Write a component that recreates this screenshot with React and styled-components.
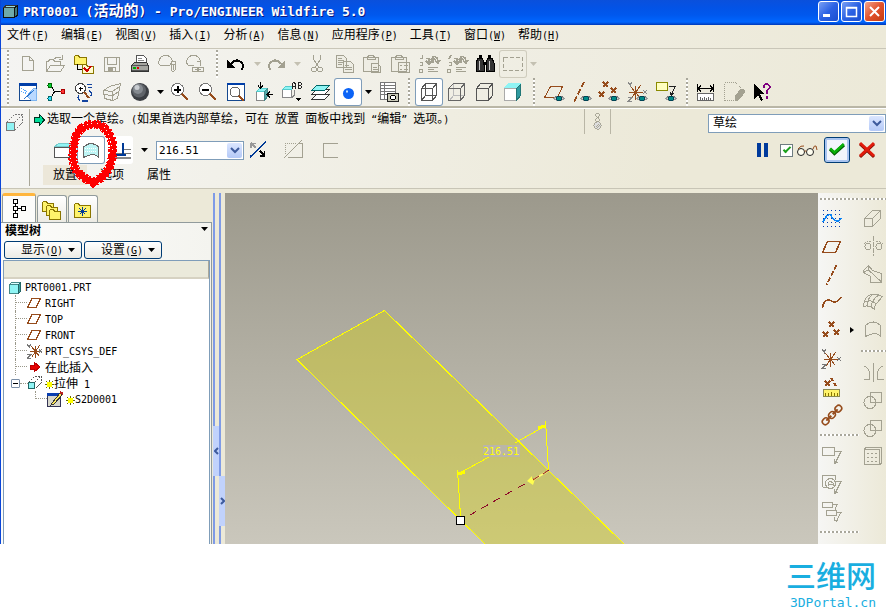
import React from "react";
import styled, { createGlobalStyle, css } from "styled-components";

const GREY = "#a3a191";
const BROWN = "#964c1c";
const CYAN = "#8ff4f4";

const GlobalStyle = createGlobalStyle`
  *, *::before, *::after { box-sizing: border-box; }
  body { margin: 0; background: #fff; color: #000; font: 12px/16px "Liberation Sans", "Noto Sans CJK SC", sans-serif; }
  button, select, input { font: inherit; color: inherit; margin: 0; padding: 0; }
  button { border: 0; background: none; }
  svg { display: block; flex: none; }
  ul { list-style: none; margin: 0; padding: 0; }
`;

/* ---------- text ---------- */

const Latin = styled.span`
  font-family: "DejaVu Sans Mono", monospace;
  font-size: ${(p) => p.$size || 10}px;
  white-space: pre;
`;

const Mixed = ({ text, size }) =>
  text.split(/([\x20-\x7e“”]+)/).map((part, i) =>
    i % 2 ? (
      <Latin key={i} $size={size}>{part}</Latin>
    ) : (
      part
    )
  );

/* ---------- icons ---------- */

const Glyph = styled.svg.attrs({ fill: "none", strokeWidth: 1, shapeRendering: "crispEdges", "aria-hidden": true })`
  stroke: currentColor;
`;

const Eye = ({ x, y }) => (
  <g transform={`translate(${x} ${y})`}>
    <path d="M0 3.500C2 .5 8 .5 10 3.500 8 6.500 2 6.500 0 3.500z" fill="#d8d8d0" stroke="#999" />
    <path d="M1 1.500h8" stroke="#777" />
    <circle cx="5" cy="3.500" r="2.500" fill="#008a86" stroke="#045" />
  </g>
);
const Cross = ({ x, y, s = 2 }) => (
  <path
    d={`M${x - s} ${y - s}L${x + s + 1} ${y + s + 1}M${x + s + 1} ${y - s}L${x - s} ${y + s + 1}`}
    stroke={BROWN}
    strokeWidth="1.500"
  />
);
const Star = ({ x, y, s = 6 }) => (
  <path
    d={`M${x - s} ${y}h${2 * s}M${x} ${y - s}v${2 * s}M${x - s + 2} ${y - s + 1}L${x + s - 2} ${y + s - 1}M${x + s - 2} ${y - s}L${x - s + 2} ${y + s}`}
    stroke={BROWN}
  />
);
const Folder = ({ x, y, w = 11, h = 9, fill = "#fff36b" }) => (
  <path d={`M${x} ${y + h}v${-h}l1-1h3l1 2h${w - 5}v${h - 1}z`} fill={fill} stroke="#8a7500" />
);

const icons = {
  fresh: <path d="M8.5 6.500h7l4 4v10h-11zM15.500 6.500v4h4" />,
  open: <path d="M4.500 21V11.500h2l1-2h4l1 2h6v3M4.500 21.500l4-6h14l-4 6zM11.500 9.500q4-4 8-1M20.500 5v4h-4" />,
  workdir: (
    <>
      <Folder x={4.5} y={6.5} w={12} h={8} />
      <path d="M7.500 14v5.500h4" stroke="#000" />
      <Folder x={12.5} y={15.5} w={11} h={8} fill="#fffbd0" />
      <path d="M14 18l3 3 4-5" stroke="#c00" strokeWidth="2" />
    </>
  ),
  save: (
    <>
      <path d="M6.500 7.500h15v14h-15zM9.500 7.500v7h9v-7M10.500 21v-4h7v4" />
      <path d="M11 18h3v3h-3z" fill={GREY} />
    </>
  ),
  print: (
    <>
      <path d="M10.500 14V5.500h7l3 3V14" fill="#fff" stroke="#555" />
      <path d="M12 8.500h4M12 10.500h6M12 12.500h6" stroke="#888" />
      <path d="M5.500 15.500l3-3h12l2 3v6h-17z" fill="#a5a5a0" stroke="#333" />
      <path d="M6 15.500h16M6 20.500h16" stroke="#555" />
      <path d="M7 18h3" stroke="#0a0" strokeWidth="2" />
      <path d="M11 18h2" stroke="#d00" strokeWidth="2" />
    </>
  ),
  find: <path d="M5.500 15.500h10l3-4q-1-6-7-6t-7 7l1 3M17.500 11.500h3.500v3h-3.500zM17 14v6q2 3 4 0V14M19 14v6" />,
  link: <path d="M5.500 15.500h6M5.500 15.500l-1-4q1-6 7-6t7 6v4M15 11.500h3v3M10.500 17.500h5v4h-5zM16.500 17.500h5v4h-5zM13 19.500h6" />,
  undo: (
    <>
      <path d="M8 14q5-6 10-2 4 4 0 8" stroke="#000" strokeWidth="2" />
      <path d="M4 10v8h8z" fill="#000" stroke="none" />
    </>
  ),
  redo: (
    <>
      <path d="M18 14q-5-6-10-2-4 4 0 8" strokeWidth="2" />
      <path d="M22 10v8h-8z" fill={GREY} stroke="none" />
    </>
  ),
  cut: (
    <>
      <path d="M10.500 5v4l5 8M17.500 5v4l-5 8" />
      <circle cx="11" cy="19.500" r="2.500" />
      <circle cx="17" cy="19.500" r="2.500" />
    </>
  ),
  copy: <path d="M5.500 5.500h7l3 3v9h-10zM7 8.500h4M7 10.500h6M7 12.500h6M7 14.500h4M12.500 11.500h7l3 3v8h-10zM14 15.500h4M14 17.500h7M14 19.500h7" fill="#eeede4" />,
  paste: <path d="M4.500 7.500h15v14h-15zM8 7.500l2-2h4l2 2v2H8zM12.500 13.500h6l3 3v6h-9zM14 17.500h4M14 19.500h6" fill="#eeede4" />,
  pasteSpecial: <path d="M4.500 7.500h15v14h-15zM8 7.500l2-2h4l2 2v2H8zM11.500 12.500h11v10h-11zM13 15.500h2M13 19.500h2M17 15.500h4M17 19.500h4" fill="#eeede4" />,
  regen: <path d="M7.500 5v3.500h-3M4.500 12.500h3v3h-3M4.500 19.500h3v3h-3zM11 8.500h3v5M11 11l3 3 3-3M18 12.500V8M15.500 10l2.500-3 2.500 3M19 6.500q4 0 4 6M20 11l3 2 2-3M13 17.500h10M13 19.500h6M13 21.500h10" strokeWidth="1.500" />,
  regenMgr: <path d="M8.500 5l-3 4M5.500 12.500h3v3h-3M4.500 19.500h3v3h-3zM11 8.500h3v5M11 11l3 3 3-3M18 12.500V8M15.500 10l2.500-3 2.500 3M19 6.500q4 0 4 6M20 11l3 2 2-3M13 17.500h10M13 19.500h6M13 21.500h10" strokeWidth="1.500" />,
  binoculars: (
    <>
      <path d="M7 8h4l2 4v9H5v-8zM17 8h4l2 5v8h-8v-9z" fill="#333" stroke="#000" />
      <path d="M8 6h3M17 6h3M12 13h4" stroke="#000" strokeWidth="3" />
      <path d="M8.500 11v9M18.500 11v9" stroke="#ccc" />
    </>
  ),
  marquee: <path d="M4.500 7.500h19v13h-19z" strokeDasharray="4 2" />,

  repaint: (
    <>
      <path d="M5.500 5.500h17v17h-17z" fill="#fff" stroke="#16498f" />
      <path d="M5 6.500h18" stroke="#003ea8" strokeWidth="3" />
      <path d="M7 10.500l6 3M7 13.500l6 2" stroke="#55a8ff" strokeDasharray="1 1" />
      <path d="M13 18l7-8 2 1v11h-5z" fill="#b9d9ff" stroke="#7db5f0" />
      <path d="M10 21l10-9" stroke="#2c77cf" />
    </>
  ),
  spin: (
    <>
      <path d="M9 8l3.500 5.500L9 20M13 13.500h7" stroke="#000" />
      <circle cx="8" cy="7.500" r="2" fill="#0c3" stroke="#060" />
      <circle cx="8" cy="20.500" r="2" fill="#3df" stroke="#066" />
      <circle cx="21" cy="13.500" r="2" fill="#f33" stroke="#a00" />
    </>
  ),
  orient: (
    <>
      <circle cx="10.500" cy="10.500" r="5" fill="#fff" stroke="#444" />
      <path d="M10.500 8.500v4M8.500 10.500h4" stroke="#000" />
      <path d="M14 14l5 6" stroke={BROWN} strokeWidth="2" />
      <path d="M17 6.500h5M18 9.500h4M9 17.500q-2 3 1 5M19 13q4 1 2 5M12 23h6" stroke="#13449f" strokeWidth="1.500" />
    </>
  ),
  sketchView: <path d="M11.500 8.500l11-3-3 15-5 2-8-2-1-8 6-4M6 12.500l8 1 8-5M14.500 13v9M6 16l8 2 6-4" />,
  shade: (
    <g shapeRendering="auto" stroke="none">
      <circle cx="14" cy="14" r="9" fill="#3b3e43" />
      <circle cx="13" cy="12.500" r="7" fill="#5f6369" />
      <circle cx="12" cy="11" r="5" fill="#858a90" />
      <circle cx="11" cy="9.500" r="2.500" fill="#c9cdd2" />
    </g>
  ),
  zoomIn: (
    <>
      <circle cx="11.500" cy="11.500" r="6" fill="#fff" stroke="#777" />
      <path d="M11.500 8v7M8 11.500h7" stroke="#000" strokeWidth="2" />
      <path d="M16 16l6 6" stroke={BROWN} strokeWidth="2" />
    </>
  ),
  zoomOut: (
    <>
      <circle cx="11.500" cy="11.500" r="6" fill="#fff" stroke="#777" />
      <path d="M8 11.500h7" stroke="#000" strokeWidth="2" />
      <path d="M16 16l6 6" stroke={BROWN} strokeWidth="2" />
    </>
  ),
  refit: (
    <>
      <path d="M5.500 5.500h17v17h-17z" fill="#fff" stroke="#16498f" />
      <path d="M5 6h18" stroke="#003ea8" strokeWidth="2" />
      <circle cx="13" cy="14" r="5" fill="#fff" stroke="#666" />
      <path d="M17 18l5 5" stroke={BROWN} strokeWidth="2" />
    </>
  ),
  reorient: (
    <>
      <path d="M6.500 13.500h8v9h-8z" fill="#fff" stroke="#888" />
      <path d="M6.500 13.500l3-3h8l-3 3z" fill={CYAN} stroke="#5cc" />
      <path d="M14.500 13.500l3-3v8l-3 4z" fill="#5aa" stroke="#488" />
      <path d="M10.500 4v6M8 7.500l2.500 3 2.500-3M23 16.500h-6M20 13.500l-3 3 3 3" stroke="#000" />
    </>
  ),
  savedViews: (
    <>
      <path d="M4.500 11.500h9v8h-9z" fill="#fff" stroke="#888" />
      <path d="M4.500 11.500l3-3h8l-2 3z" fill={CYAN} stroke="#5cc" />
      <path d="M13.500 20l3-3v-5" stroke="#888" />
      <path d="M14.500 11V6l1.500-2 1.500 2v5M14.500 8.500h3M20.500 11V4.500h2l1 1v1l-1 1h-2M22.500 7.500l1 1v1l-1 1h-2" stroke="#222" />
      <path d="M17 20h6l-3 3z" fill="#000" stroke="none" />
    </>
  ),
  layers: (
    <>
      <path d="M5.500 21.500l5-5h13l-5 5z" fill="#fff" stroke="#333" />
      <path d="M5.500 16.500l5-5h13l-5 5z" fill="#fff" stroke="#333" />
      <path d="M5.500 12.500l5-5h13l-5 5z" fill={CYAN} stroke="#066" />
    </>
  ),
  blueDot: (
    <g shapeRendering="auto">
      <circle cx="14.500" cy="15.500" r="5.500" fill="#0b63f6" stroke="none" />
      <path d="M12 13.500h2" stroke="#bfe0ff" strokeWidth="2" />
    </g>
  ),
  viewMgr: (
    <>
      <path d="M6.500 4.500h15v17h-15zM6 7.500h16M6 10.500h16M6 13.500h16M6 16.500h16M10.500 5v16" fill="#fff" stroke="#777" />
      <path d="M13.500 15.500h11v8h-11z" fill="#c9c9b8" stroke="#222" />
      <circle cx="19" cy="19.500" r="2.500" fill="#fff" stroke="#000" />
    </>
  ),
  wire: <path d="M6.500 10.500h11v12h-11zM6.500 10.500l4-5h11l-4 5M21.500 5.500v12l-4 5M10.500 5.500v12h11M10.500 17.500l-4 5" stroke="#555" />,
  hidden: (
    <>
      <path d="M10.500 5.500v12h11M10.500 17.500l-4 5" stroke="#bbb" />
      <path d="M5.500 10.500h12v12h-12zM5.500 10.500l5-5h11l-4 5M21.500 5.500v12l-4 5" stroke="#666" />
    </>
  ),
  noHidden: <path d="M5.500 10.500h12v12h-12zM5.500 10.500l4-5h12l-4 5M21.500 5.500v12l-4 5" stroke="#555" />,
  shaded: (
    <>
      <path d="M5.500 10.500h12v12h-12z" fill="#fff" stroke="#aaa" />
      <path d="M5.500 9.500l4-4h12l-4 4z" fill={CYAN} stroke={CYAN} />
      <path d="M17.500 10.500l4-4v11l-4 5z" fill="#2f9aa0" stroke="#277" />
    </>
  ),
  planeShow: (
    <>
      <path d="M10.500 8.500h12l-5 11h-13z" stroke={BROWN} />
      <Eye x={14} y={17} />
    </>
  ),
  axisShow: (
    <>
      <path d="M16 4L6 24" stroke={BROWN} strokeDasharray="6 2" strokeWidth="1.500" />
      <Eye x={13} y={17} />
    </>
  ),
  pointShow: (
    <>
      <Cross x={9} y={6} />
      <Cross x={17} y={12} />
      <Cross x={5} y={16} />
      <Eye x={13} y={17} />
    </>
  ),
  csysShow: (
    <>
      <Star x={11.5} y={14.5} s={7} />
      <path d="M4 4l2 3 2-3M6 7v2M19 12l4 4M23 12l-4 4M4 19.500h4l-4 4h4" stroke="#888" />
      <Eye x={13} y={17} />
    </>
  ),
  noteShow: (
    <>
      <path d="M4.500 4.500h11v8h-11z" fill="#ffffc0" stroke="#8a8a00" />
      <path d="M17 8.500h6l-4 9M18 14l1 3 3-2" stroke="#222" />
      <Eye x={14} y={17} />
    </>
  ),
  measure: (
    <>
      <path d="M4.500 6v8M20.500 6v8M5 10.500h15M8 7.500l-3 3 3 3M17 7.500l3 3-3 3" stroke="#000" />
      <path d="M4.500 15.500h16v7h-16z" fill="#fff" stroke="#666" />
      <path d="M7.500 22v-3M9.500 22v-2M11.500 22v-3M13.500 22v-2M15.500 22v-3M17.500 22v-2" stroke="#666" />
    </>
  ),
  erase: (
    <>
      <path d="M3.500 22.500V4.500h11l6 6M3.500 22.500h9" strokeDasharray="1 1" />
      <path d="M14 19l6-8 3 1v3l-6 7h-3z" fill={GREY} />
    </>
  ),
  whatsThis: (
    <>
      <path d="M5 6v15l4-4 3 6 2-1-3-6h5z" fill="#000" stroke="none" />
      <path d="M14.500 10V8l2-2h2l2 2v2l-3 3v3M17.500 18v3" stroke="#800080" strokeWidth="2" />
    </>
  ),

  sketch: (
    <>
      {[6, 10, 14, 18, 22].map((y) => (
        <path key={y} d={`M5 ${y}.500h18`} stroke="#0a3fb0" strokeDasharray="1 3" />
      ))}
      <path d="M5 18q4-9 8-7 2 6 6 6 3 0 4-3" stroke="#0a84f6" strokeWidth="1.500" />
    </>
  ),
  plane: <path d="M9.500 9.500h13l-5 11h-13z" stroke={BROWN} strokeWidth="1.500" />,
  axis: <path d="M18.500 5L8.500 25" stroke={BROWN} strokeWidth="2" strokeDasharray="5 2" />,
  curve: <path d="M4.500 20q1-8 6-8c4 0 4 3 7 2q3-1 6-5" stroke={BROWN} strokeWidth="1.500" />,
  points: (
    <>
      <Cross x={13} y={8} />
      <Cross x={7} y={18} />
      <Cross x={18} y={16} />
    </>
  ),
  csys: (
    <>
      <Star x={12.5} y={15.5} s={7} />
      <path d="M4 5l2 3 2-3M6 8v2M19 13l4 4M23 13l-4 4M4 20.500h4l-4 4h4" stroke="#777" />
    </>
  ),
  analysis: (
    <>
      <Cross x={9} y={11} />
      <path d="M13 6l2 3M16 11l2 3" stroke={BROWN} strokeWidth="2" />
      <path d="M5.500 17.500h16v7h-16z" fill="#fff36b" stroke="#8a8a50" />
      <path d="M7.500 24v-3M10.500 24v-3M13.500 24v-4M16.500 24v-3M19.500 24v-3" stroke="#8a7500" />
    </>
  ),
  chain: (
    <g transform="rotate(-45 14 15)" stroke={BROWN} shapeRendering="auto">
      <rect x="1.500" y="12" width="7" height="6" rx="3" strokeWidth="1.500" />
      <rect x="10.500" y="12" width="7" height="6" rx="3" strokeWidth="1.500" />
      <rect x="19.500" y="12" width="7" height="6" rx="3" strokeWidth="1.500" />
      <path d="M6 15h7M15 15h7" strokeWidth="2" />
    </g>
  ),
  note: <path d="M4.500 5.500h12v8h-12zM17 9.500h6l-6 12M16 17v5l4-2" />,
  noteGeom: (
    <>
      <path d="M4.500 16.500v-11h13v4M4.500 17.500h5M18 11.500h5l-6 12M16 19v5l4-2" />
      <circle cx="12.500" cy="13.500" r="5" />
      <path d="M10 16v-3l2-2 3 2v3M10 14.500h5" />
    </>
  ),
  noteStack: <path d="M4.500 4.500h10v5h-10zM15 6.500h4l-2 5M8.500 12.500h10v5h-10zM19 14.500h4l-5 9M16 19v4l4-1" />,
  extrude: <path d="M5.500 14.500h8v8h-8zM5.500 14.500l8-8h8v8l-8 8M13.500 14.500l8-8" />,
  revolve: (
    <>
      <path d="M14.500 4v20" strokeDasharray="5 1" />
      <circle cx="9" cy="14.500" r="3" />
      <circle cx="20" cy="14.500" r="3" />
      <path d="M5 12q3-3 7-2M17 10q4-1 7 2" strokeDasharray="2 1" />
    </>
  ),
  blend: <path d="M4.500 10.500l5-5 4 5 9 3v9h-11v-6l-7-4zM9.500 6v4l-5 2M9.500 10l13 12" />,
  boundary: <path d="M8.500 8.500q6-5 15 0l-5 6q-3 1-3 7-5-5-11-3 0-6 4-10M6 14q6-3 10 1M14 6q-6 4-5 12M20 7q-7 4-8 12" />,
  surface: <path d="M6.500 20.500V9.500q8-7 15 0v11q-2-3-6-3t-9 3" />,
  mirror: <path d="M14.500 5v19M5.500 8q5 2 5 9v4h-6M23.500 8q-5 2-5 9v4h6" />,
  merge: (
    <>
      <path d="M11.500 6.500h11v10h-11z" />
      <circle cx="11" cy="16.500" r="6" />
    </>
  ),
  pattern: (
    <>
      <path d="M5.500 7.500l1-2h16v16l-2 1h-15zM20.500 7v15M5 7.500h15" />
      <path d="M8 11.500h11M8 15.500h11M8 19.500h11" strokeDasharray="2 2" />
    </>
  ),

  solid: (
    <>
      <path d="M5.500 11.500h15v10h-15z" fill="#fff" stroke="#555" />
      <path d="M5.500 10.500l4-3h13l-2 3z" fill={CYAN} stroke="#7cc" />
    </>
  ),
  surfaceOn: (
    <>
      <path d="M6.500 21.500V11q8-7 15 0v10.500q-2-3-6-3t-9 3" fill="#bdf5f5" stroke="#666" />
      <path d="M8 12.500h12M8 15.500h12" stroke="#fff" strokeDasharray="1 1" />
    </>
  ),
  depth: (
    <>
      <path d="M0 0h28v28H0z" fill="#fff" stroke="none" />
      <path d="M4 13.500h5M19 13.500h7M4 17.500h22" stroke="#777" strokeWidth="1.500" />
      <path d="M4 22h22" stroke="#888" strokeWidth="2" />
      <path d="M8 7v12h13M18 7v12" stroke="#003a96" strokeWidth="2" />
    </>
  ),
  flip: (
    <>
      <path d="M6 21L22 6" stroke="#003a96" strokeWidth="1.500" />
      <path d="M7 7l5 5M7 12V7.500h5" stroke="#999" strokeWidth="1.500" />
      <path d="M16 15l4 4M20.500 15v5h-5" stroke="#000" strokeWidth="1.500" />
    </>
  ),
  trim: (
    <>
      <path d="M5.500 18V7.500H16" strokeDasharray="1 1" />
      <path d="M4 22L22 4M8 21.500h14.500v-14H18" />
    </>
  ),
  thicken: <path d="M22 7.500H7.500v14H22" />,
  dashExtrude: (
    <>
      <path d="M5.500 13.500h8v8h-8z" fill={CYAN} stroke="#777" />
      <path d="M5.500 13.500l8-8h8v8l-8 8M13.500 13.500l8-8" stroke="#777" strokeDasharray="2 1" />
    </>
  ),
  bead: (
    <>
      <circle cx="14" cy="7" r="2" />
      <circle cx="14" cy="12" r="2" />
      <circle cx="14" cy="18.500" r="4" fill="#ddd" />
      <path d="M12 20l4-4M14 21l3-3" />
    </>
  ),
  treeTab: <path d="M8.500 3.500h4v4h-4zM8.500 10.500h4v4h-4zM8.500 17.500h4v4h-4zM16.500 10.500h4v4h-4zM10.500 8v2M10.500 15v2M13 12.500h3" stroke="#000" />,
  foldersTab: (
    <>
      <Folder x={4.5} y={6.5} />
      <Folder x={8.5} y={10.5} />
      <Folder x={11.5} y={14.5} />
    </>
  ),
  favTab: (
    <>
      <Folder x={5.5} y={8.5} w={16} h={13} />
      <path d="M13.500 11v9M9 15.500h9M10.500 12.500l6 6M16.500 12.500l-6 6" stroke="#003a96" />
    </>
  ),
  pause: <path d="M10 7v14M17 7v14" stroke="#003a9c" strokeWidth="4" />,
  glasses: (
    <g shapeRendering="auto">
      <circle cx="8" cy="16" r="3.500" fill="#fffef0" stroke="#222" />
      <circle cx="17" cy="16" r="3.500" fill="#fffef0" stroke="#222" />
      <path d="M11.500 15h2M5 13q3-4 6-3M20 13q1-4 3-3l1 4" stroke={BROWN} />
    </g>
  ),
  accept: (
    <g shapeRendering="auto">
      <path d="M6 13l5 5L22 8" stroke="#005c00" strokeWidth="4" />
      <path d="M6 12l5 5L22 7" stroke="#08b008" strokeWidth="3" />
    </g>
  ),
  cancel: (
    <g shapeRendering="auto">
      <path d="M7 8l14 13M21 8L7 21" stroke="#7c0c00" strokeWidth="3" />
      <path d="M7 7l14 13M21 7L7 20" stroke="#e01b0b" strokeWidth="3" />
    </g>
  ),
};

const Icon = ({ name, size = 28 }) => (
  <Glyph viewBox="0 0 28 28" width={size} height={size}>{icons[name]}</Glyph>
);

const Part = ({ size = 14 }) => (
  <Glyph viewBox="0 0 14 14" width={size} height={size}>
    <path d="M1.500 3.500h9v9h-9z" fill={CYAN} stroke="#488" />
    <path d="M1.500 3.500l2-2h9l-2 2z" fill="#dff" stroke="#488" />
    <path d="M10.500 3.500l2-2v9l-2 2z" fill="#39a0a0" stroke="#266" />
  </Glyph>
);
const TitlePart = () => (
  <Glyph viewBox="0 0 14 14" width="15" height="15">
    <path d="M.5 3.500h10v9H.5z" fill="#6fa9a9" stroke="#111" />
    <path d="M.5 3.500l2-2h11l-3 2z" fill="#9adcdc" stroke="#333" />
    <path d="M10.500 3.500l3-2v9l-3 2z" fill="#3f7777" stroke="#111" />
  </Glyph>
);
const TreePlane = () => (
  <Glyph viewBox="0 0 14 14" width="14" height="14">
    <path d="M5 2.500h8.500L9 11.500H.5z" stroke={BROWN} strokeWidth="1.500" />
  </Glyph>
);
const TreeCsys = () => (
  <Glyph viewBox="0 0 16 16" width="16" height="16">
    <Star x={8.5} y={8.5} s={6} />
    <path d="M0 1l2 3 2-3M2 4v1M12 6l3 4M15 6l-3 4M0 11.500h4l-4 4h4" stroke="#777" />
  </Glyph>
);
const TreeArrow = () => (
  <Glyph viewBox="0 0 14 14" width="14" height="14">
    <path d="M3 5h4V2l6 5-6 5V9H3z" fill="#e60000" stroke="#b00" />
  </Glyph>
);
const TreeExtrude = () => (
  <Glyph viewBox="0 0 14 14" width="14" height="14">
    <path d="M.5 6.500h6v6h-6z" fill={CYAN} stroke="#266" />
    <path d="M.5 6.500l6-6h7v6l-6 6M6.500 6.500l6-6" stroke="#555" strokeDasharray="2 1" />
  </Glyph>
);
const TreeSketch = () => (
  <Glyph viewBox="0 0 16 16" width="16" height="16">
    <path d="M.5 2.500h13v13H.5z" fill="#d8d8cc" stroke="#335" />
    <path d="M0 3.500h13" stroke="#0a3fb0" strokeWidth="3" />
    <path d="M5 12l8-10 2 2-8 9-3 1z" fill="#ffe95a" stroke="#333" />
    <path d="M13 1l3 2" stroke="#b22" strokeWidth="2" />
  </Glyph>
);
const Spark = () => (
  <Glyph viewBox="0 0 9 9" width="9" height="9">
    <path d="M4.500 0v9M0 4.500h9M1 1l7 7M8 1L1 8" stroke="#6a6a00" />
    <path d="M2 2h5v5H2z" fill="#ff0" stroke="none" />
  </Glyph>
);
const GreenArrow = () => (
  <Glyph viewBox="0 0 12 14" width="12" height="14">
    <path d="M.5 4.500h5v-3l5 5.500-5 5.500v-3h-5z" fill="#0d9" stroke="#032" />
  </Glyph>
);
const Caret = ({ color = "#000" }) => (
  <svg viewBox="0 0 7 4" width="7" height="4" aria-hidden="true">
    <path d="M0 0h7L3.500 4z" fill={color} />
  </svg>
);
const Chevron = ({ d = "M1 1l4 4 4-4", w = 10, h = 7 }) => (
  <svg viewBox={`0 0 ${w} ${h}`} width={w} height={h} aria-hidden="true">
    <path d={d} fill="none" stroke="#3d5a9c" strokeWidth="2" />
  </svg>
);

/* ---------- frame ---------- */

const Page = styled.div`
  min-height: 100vh;
  display: flex;
  flex-direction: column;
`;
const Window = styled.div`
  flex: 1;
  display: flex;
  flex-direction: column;
  border-left: 1px solid #0a46d8;
  background: #ece9d8;
`;
const TitleBar = styled.header`
  height: 25px;
  display: flex;
  align-items: center;
  gap: 5px;
  padding: 0 0 2px 2px;
  background: linear-gradient(#0a50dc, #0353e6 30%, #0058ee 60%, #0066ff 88%, #0038b8);
  color: #fff;
`;
const Title = styled.h1`
  flex: 1;
  margin: 0;
  font-size: 15px;
  line-height: 20px;
  font-weight: 700;
  text-shadow: 1px 1px #0a1883;
  white-space: nowrap;
`;
const WindowButtons = styled.div`
  display: flex;
  gap: 2px;
  padding-right: 1px;
`;
const WindowButton = styled.button`
  width: 21px;
  height: 21px;
  display: grid;
  place-items: center;
  border: 1px solid #fff;
  border-radius: 3px;
  background: ${(p) => (p.$close ? "linear-gradient(135deg,#f0a48c,#e2512b 50%,#c33c12)" : "linear-gradient(135deg,#7aa0f4,#2c62e4 50%,#1a4fd0)")};
`;
const MenuBar = styled.nav`
  height: 24px;
  display: flex;
  align-items: center;
  gap: 12px;
  padding: 0 0 2px 6px;
  background: linear-gradient(90deg, #f4f3ef, #ece9d8);
  border-bottom: 1px solid #c9c6b8;
`;
const MenuItem = styled.button`
  white-space: nowrap;
  line-height: 16px;
`;
const Toolbars = styled.div`
  padding-top: 1px;
  border-bottom: 2px solid #b9b6a6;
  background: linear-gradient(100deg, #f4f4f2, #ece9d8);
`;
const ToolRow = styled.div`
  height: 28px;
  display: flex;
  align-items: center;
`;
const Grip = styled.span`
  width: 13px;
  height: 28px;
  flex: none;
  display: flex;
  justify-content: center;
  &::before {
    content: "";
    width: 2px;
    background: repeating-linear-gradient(#a9a79b 0 2px, #fff 2px 4px);
  }
`;
const ToolButton = styled.button`
  width: 28px;
  height: 28px;
  flex: none;
  display: grid;
  place-items: center;
  overflow: hidden;
  color: ${GREY};
  border-radius: 3px;
  ${(p) => p.$on && css`background: #fff; box-shadow: inset 0 0 0 1px #7f9db9;`}
  ${(p) => p.$framed && css`box-shadow: inset 0 0 0 1px #cfccbd;`}
`;
const DropButton = styled.button`
  width: ${(p) => p.$w || 12}px;
  height: 28px;
  display: grid;
  place-items: center;
`;

/* ---------- dashboard ---------- */

const Dashboard = styled.section`
  position: relative;
  display: flex;
  height: 85px;
  border-top: 1px solid #fff;
  background: linear-gradient(100deg, #f5f5f3, #ece9d8 75%);
  box-shadow: inset 0 -4px #ece9d8, inset 0 -5px #c8c5b6;
`;
const DashIcon = styled.div`
  width: 29px;
  height: 77px;
  flex: none;
  border-right: 1px solid #a9a799;
`;
const DashBody = styled.div`
  flex: 1;
  min-width: 0;
`;
const MessageRow = styled.div`
  height: 26px;
  display: flex;
  align-items: flex-start;
`;
const Message = styled.p`
  flex: 1;
  display: flex;
  align-items: center;
  gap: 1px;
  margin: 1px 0 0 4px;
  line-height: 18px;
  white-space: nowrap;
`;
const BeadBox = styled.span`
  margin-right: 97px;
  height: 25px;
  border: solid #b9b6a6;
  border-width: 0 1px;
  overflow: hidden;
  color: ${GREY};
  svg { width: 25px; height: 25px; }
`;
const Combo = styled.label`
  display: grid;
  width: ${(p) => p.$w}px;
  margin-top: ${(p) => p.$top || 0}px;
  height: 19px;
  border: 1px solid #7f9db9;
  background: #fff;
  align-items: center;
  > * { grid-area: 1 / 1; }
  select {
    appearance: none;
    width: 100%;
    height: 17px;
    border: 0;
    padding-left: ${(p) => (p.$latin ? 2 : 4)}px;
    background: transparent;
    font-size: ${(p) => (p.$latin ? 11 : 12)}px;
    line-height: 17px;
    ${(p) => p.$latin && css`font-family: "DejaVu Sans Mono", monospace;`}
  }
`;
const ComboArrow = styled.span`
  justify-self: end;
  width: 15px;
  height: 15px;
  margin-right: 1px;
  display: grid;
  place-items: center;
  border-radius: 2px;
  background: linear-gradient(#dbe6ff, #b4c9f7);
  pointer-events: none;
`;
const ControlRow = styled.div`
  height: 30px;
  display: flex;
  align-items: center;
  padding-left: 19px;
  padding-right: 5px;
`;
const ControlGroup = styled.div`
  display: flex;
  align-items: center;
  gap: ${(p) => p.$gap || 0}px;
  margin-left: ${(p) => p.$left || 0};
`;
const Check = styled.input`
  appearance: none;
  width: 13px;
  height: 13px;
  border: 1px solid #6e7c80;
  background: #fff;
  display: grid;
  place-items: center;
  &:checked::before {
    content: "";
    width: 8px;
    height: 4px;
    margin-bottom: 3px;
    border: solid #1ca01c;
    border-width: 0 0 2px 2px;
    transform: rotate(-45deg);
  }
`;
const Preview = styled.label`
  display: flex;
  align-items: center;
`;
const AcceptButton = styled.button`
  width: 26px;
  height: 26px;
  display: grid;
  place-items: center;
  overflow: hidden;
  border: 1px solid #003c74;
  border-radius: 3px;
  background: #f2f5fb;
  box-shadow: inset 0 0 0 2px #a9c4f0;
  svg { width: 24px; height: 24px; }
`;
const SlideRow = styled.div`
  height: 20px;
  display: flex;
  padding-left: 13px;
  gap: 3px;
`;
const SlideTab = styled.button`
  width: 44px;
  height: 20px;
  line-height: 20px;
  background: ${(p) => (p.$on ? "#ece7d9" : "none")};
`;
const Scribble = styled.svg`
  position: absolute;
  left: 64px;
  top: 7px;
  pointer-events: none;
`;

/* ---------- workspace ---------- */

const Workspace = styled.main`
  flex: 1;
  min-height: 351px;
  display: flex;
`;
const Navigator = styled.aside`
  width: 211px;
  flex: none;
  display: flex;
  flex-direction: column;
`;
const Tabs = styled.div`
  display: flex;
  align-items: flex-end;
  gap: 1px;
  height: 29px;
  padding-left: 1px;
`;
const Tab = styled.button`
  width: ${(p) => (p.$on ? 34 : 30)}px;
  height: ${(p) => (p.$on ? 29 : 27)}px;
  display: grid;
  place-items: center;
  overflow: hidden;
  border: 1px solid #919b9c;
  border-top: ${(p) => (p.$on ? "3px solid #ffb63d" : "1px solid #919b9c")};
  border-bottom: 0;
  border-radius: 3px 3px 0 0;
  background: ${(p) => (p.$on ? "#fcfcfa" : "linear-gradient(#fff, #ecebe4)")};
`;
const TreePane = styled.div`
  flex: 1;
  display: flex;
  flex-direction: column;
  border: 1px solid #919b9c;
  border-width: 1px 1px 0 0;
  background: linear-gradient(90deg, #fcfcfa, #f4f4ef);
`;
const TreeHead = styled.div`
  display: flex;
  justify-content: space-between;
  height: 17px;
  padding: 0 3px 0 4px;
  h2 { margin: 0; font-size: 12px; line-height: 17px; }
  button { height: 11px; }
`;
const TreeActions = styled.div`
  display: flex;
  gap: 2px;
  padding: 1px 0 0 3px;
`;
const PushButton = styled.button`
  width: 78px;
  height: 18px;
  display: flex;
  align-items: center;
  justify-content: flex-end;
  gap: 5px;
  padding: 0 6px;
  line-height: 16px;
  border: 1px solid #003c74;
  border-radius: 3px;
  background: linear-gradient(#fff, #ecebe5);
`;
const TreeBox = styled.div`
  flex: 1;
  margin: 1px 1px 0 2px;
  border: 1px solid #7f9db9;
  border-bottom: 0;
  background: #fff;
`;
const TreeColumn = styled.div`
  height: 18px;
  border-right: 1px solid #aca899;
  border-bottom: 2px solid #d6d2c2;
  background: #ebeadb;
`;
const Node = styled.li`
  height: 16px;
  display: flex;
  align-items: center;
  white-space: nowrap;
`;
const Guide = styled.span`
  width: 12px;
  height: ${(p) => (p.$last ? 8 : 16)}px;
  align-self: flex-start;
  flex: none;
  margin-left: ${(p) => p.$indent}px;
  border-left: 1px dotted #9a988a;
  &::before {
    content: "";
    display: block;
    height: 8px;
    border-bottom: 1px dotted #9a988a;
  }
`;
const Expander = styled.button`
  width: 9px;
  height: 9px;
  margin-left: 7px;
  border: 1px solid #7b8fa8;
  border-radius: 1px;
  display: grid;
  place-items: center;
  &::before { content: ""; width: 5px; height: 1px; background: #000; }
`;
const Stub = styled.span`
  width: 8px;
  border-top: 1px dotted #9a988a;
`;
const Label = styled.span`
  display: flex;
  align-items: center;
  padding-top: 2px;
  margin-left: ${(p) => p.$gap || 4}px;
`;
const SashPair = styled.div`
  display: flex;
  padding-left: 1px;
`;
const Sash = styled.div`
  width: 6px;
  display: flex;
  flex-direction: column;
  border-left: 2px solid #7f9be6;
  &::before { content: ""; flex: ${(p) => p.$before}; }
  &::after { content: ""; flex: ${(p) => p.$after}; }
`;
const SashButton = styled.button`
  width: 6px;
  height: 50px;
  margin-left: -2px;
  display: grid;
  place-items: center;
  background: #c1d2fc;
`;
const Viewport = styled.div`
  flex: 1;
  min-width: 0;
  display: grid;
  overflow: hidden;
  background: linear-gradient(#9c998c, #cac7bc);
  svg { width: 100%; height: 100%; min-height: 0; }
`;
const SideTools = styled.div`
  display: flex;
  flex: none;
  background: linear-gradient(90deg, #f6f6f4, #ece9d8);
`;
const SideColumn = styled.div`
  width: ${(p) => p.$w}px;
  display: flex;
  flex-direction: column;
`;
const SideGrip = styled.span`
  height: ${(p) => p.$h || 14}px;
  display: flex;
  align-items: center;
  padding-left: 2px;
  &::before {
    content: "";
    flex: 1;
    height: 2px;
    background: repeating-linear-gradient(90deg, #a9a79b 0 2px, #fff 2px 4px);
  }
`;
const SideItem = styled.div`
  display: flex;
  align-items: center;
  gap: 4px;
`;

/* ---------- footer ---------- */

const Footer = styled.footer`
  height: 71px;
  display: flex;
  justify-content: flex-end;
  padding: 16px 10px 0 0;
  background: #fff;
`;
const Logo = styled.a`
  color: #19aee0;
  text-decoration: none;
  text-align: right;
  strong { display: block; font-size: 30px; line-height: 34px; font-weight: 500; }
  span { display: block; font: 13px/18px "DejaVu Sans Mono", monospace; }
`;

/* ---------- content ---------- */

const menus = [
  ["文件", "F"], ["编辑", "E"], ["视图", "V"], ["插入", "I"], ["分析", "A"],
  ["信息", "N"], ["应用程序", "P"], ["工具", "T"], ["窗口", "W"], ["帮助", "H"],
];

/* "|" is a grip, "v" a live drop-down arrow, "-" a disabled one */
const rowOne = "| fresh open workdir save print find link | undo - redo - cut copy paste pasteSpecial regen regenMgr binoculars marquee -".split(" ");
const rowTwo = "| repaint spin orient sketchView shade v zoomIn zoomOut refit reorient savedViews layers blueDot v viewMgr | wire hidden noHidden shaded | planeShow axisShow pointShow csysShow noteShow | measure erase whatsThis".split(" ");
const sideOne = "sketch plane axis curve points csys analysis chain | note noteGeom noteStack".split(" ");
const sideTwo = "extrude revolve blend boundary surface | mirror merge merge pattern".split(" ");

const pressed = new Set(["blueDot", "wire"]);

const Tools = ({ items }) => (
  <ToolRow>
    {items.map((item, i) => {
      if (item === "|") return <Grip key={i} />;
      if (item === "v" || item === "-")
        return (
          <DropButton key={i} aria-label={`${items[i - 1]} options`}>
            <Caret color={item === "v" ? "#000" : "#c4c1b2"} />
          </DropButton>
        );
      return (
        <ToolButton key={i} aria-label={item} $on={pressed.has(item)} $framed={item === "marquee"}>
          <Icon name={item} />
        </ToolButton>
      );
    })}
  </ToolRow>
);

const Side = ({ items, width }) => (
  <SideColumn $w={width}>
    <SideGrip $h={11} />
    {items.map((item, i) =>
      item === "|" ? (
        <SideGrip key={i} />
      ) : (
        <SideItem key={i}>
          <ToolButton aria-label={item}><Icon name={item} /></ToolButton>
          {item === "points" && (
            <svg viewBox="0 0 4 6" width="4" height="6" aria-hidden="true"><path d="M0 0v6l4-3z" /></svg>
          )}
        </SideItem>
      )
    )}
    {width > 30 && <SideGrip $h={12} />}
  </SideColumn>
);

const Model = () => (
  <svg viewBox="0 0 593 351" preserveAspectRatio="xMinYMin slice" role="img" aria-label="216.51">
    <path d="M159 117L72 166 260 351H399z" fill="#d0cc20" fillOpacity=".45" />
    <g fill="none" stroke="#ff0" shapeRendering="crispEdges">
      <path d="M260 351L72 166.500 159.500 117.500 399 351" />
      <path d="M232.500 277L235.500 323M320.500 228L323.500 277M233 281L264 264M290 250L320 233" />
      <path d="M233 281l7-2M313 235l7-2" strokeWidth="3" />
    </g>
    <path d="M324 277L245 322" stroke="#8c0a2a" strokeDasharray="8 6" shapeRendering="crispEdges" />
    <path d="M323 278L306 288" stroke="#ffff70" strokeWidth="2" />
    <path d="M302 288l5-5v3h3l-2 6z" fill="#ffff50" />
    <path d="M324 277l-6 4M314 283l-6 4" stroke="#8c0a2a" />
    <rect x="258" y="252" width="37" height="12" fill="#bab6a8" />
    <text x="258" y="262" fill="#ff0" fontFamily="DejaVu Sans Mono, monospace" fontSize="10">216.51</text>
    <rect x="231.500" y="323.500" width="8" height="8" fill="#fff" stroke="#000" />
  </svg>
);

const planes = ["RIGHT", "TOP", "FRONT"];
const loop = "M17 12Q9 18 8 36t7 22q6 6 13 8 10-3 16-14 6-14 3-27-4-12-11-15-9-4-19 2z";

export default function App() {
  return (
    <Page>
      <GlobalStyle />
      <Window>
        <TitleBar>
          <TitlePart />
          <Title><Mixed text="PRT0001 (活动的) - Pro/ENGINEER Wildfire 5.0" size={13} /></Title>
          <WindowButtons>
            <WindowButton aria-label="最小化">
              <svg viewBox="0 0 13 13" width="13" height="13"><path d="M1 9h7v3H1z" fill="#fff" /></svg>
            </WindowButton>
            <WindowButton aria-label="最大化">
              <svg viewBox="0 0 13 13" width="13" height="13"><path d="M1.500 2.500h10v9h-10zM1 3h11" fill="none" stroke="#fff" strokeWidth="1.500" /></svg>
            </WindowButton>
            <WindowButton aria-label="关闭" $close>
              <svg viewBox="0 0 13 13" width="13" height="13"><path d="M2 2l9 9M11 2l-9 9" stroke="#fff" strokeWidth="2" /></svg>
            </WindowButton>
          </WindowButtons>
        </TitleBar>

        <MenuBar>
          {menus.map(([name, key]) => (
            <MenuItem key={name}>{name}<Latin>(<u>{key}</u>)</Latin></MenuItem>
          ))}
        </MenuBar>

        <Toolbars>
          <Tools items={rowOne} />
          <Tools items={rowTwo} />
        </Toolbars>

        <Dashboard>
          <DashIcon><Icon name="dashExtrude" /></DashIcon>
          <DashBody>
            <MessageRow>
              <Message>
                <GreenArrow />
                <span><Mixed text="选取一个草绘。(如果首选内部草绘，可在 放置 面板中找到 “编辑” 选项。)" /></span>
              </Message>
              <BeadBox><Icon name="bead" /></BeadBox>
              <Combo $w={178} $top={5}>
                <select aria-label="选择过滤器"><option>草绘</option></select>
                <ComboArrow><Chevron /></ComboArrow>
              </Combo>
            </MessageRow>
            <ControlRow>
              <ToolButton aria-label="实体"><Icon name="solid" /></ToolButton>
              <ToolButton aria-label="曲面" $on><Icon name="surfaceOn" /></ToolButton>
              <ToolButton aria-label="深度"><Icon name="depth" /></ToolButton>
              <DropButton aria-label="深度选项" $w={23}><Caret /></DropButton>
              <Combo $w={88} $latin>
                <select aria-label="深度值"><option>216.51</option></select>
                <ComboArrow><Chevron /></ComboArrow>
              </Combo>
              <ControlGroup $gap={8}>
                <ToolButton aria-label="反向"><Icon name="flip" /></ToolButton>
                <ToolButton aria-label="移除材料"><Icon name="trim" /></ToolButton>
                <ToolButton aria-label="加厚"><Icon name="thicken" /></ToolButton>
              </ControlGroup>
              <ControlGroup $left="auto" $gap={3}>
                <ToolButton aria-label="暂停"><Icon name="pause" /></ToolButton>
                <Preview>
                  <Check type="checkbox" defaultChecked aria-label="预览" />
                  <Icon name="glasses" />
                </Preview>
                <AcceptButton aria-label="确定"><Icon name="accept" /></AcceptButton>
                <ToolButton aria-label="取消"><Icon name="cancel" /></ToolButton>
              </ControlGroup>
            </ControlRow>
            <SlideRow>
              <SlideTab $on>放置</SlideTab>
              <SlideTab>选项</SlideTab>
              <SlideTab>属性</SlideTab>
            </SlideRow>
          </DashBody>
          <Scribble width="56" height="76" viewBox="0 0 56 76" fill="none" stroke="#fe0000" shapeRendering="crispEdges" aria-hidden="true">
            <path d={loop} strokeWidth="6" strokeLinejoin="round" />
            <path d={loop} strokeWidth="9" strokeDasharray="3 1 2 2" />
            <path d="M24 66l4 6 5-6z" fill="#fe0000" />
            <path d="M32 7q8 3 12 12l4 16M6 26l-1 16 5 14M18 10l12-3" stroke="#fff" strokeDasharray="1 3" />
          </Scribble>
        </Dashboard>

        <Workspace>
          <Navigator>
            <Tabs>
              <Tab $on aria-label="模型树"><Icon name="treeTab" /></Tab>
              <Tab aria-label="文件夹浏览器"><Icon name="foldersTab" /></Tab>
              <Tab aria-label="收藏夹"><Icon name="favTab" /></Tab>
            </Tabs>
            <TreePane>
              <TreeHead>
                <h2>模型树</h2>
                <button aria-label="模型树选项"><Caret /></button>
              </TreeHead>
              <TreeActions>
                <PushButton><span>显示<Latin>(<u>O</u>)</Latin></span><Caret /></PushButton>
                <PushButton><span>设置<Latin>(<u>G</u>)</Latin></span><Caret /></PushButton>
              </TreeActions>
              <TreeBox>
                <TreeColumn />
                <ul>
                  <Node><Label><Part /></Label><Label $gap={3}><Latin>PRT0001.PRT</Latin></Label></Node>
                  {planes.map((name) => (
                    <Node key={name}><Guide $indent={11} /><TreePlane /><Label><Latin>{name}</Latin></Label></Node>
                  ))}
                  <Node><Guide $indent={11} /><TreeCsys /><Label $gap={2}><Latin>PRT_CSYS_DEF</Latin></Label></Node>
                  <Node><Guide $indent={11} /><TreeArrow /><Label>在此插入</Label></Node>
                  <Node>
                    <Expander aria-label="折叠" /><Stub /><TreeExtrude />
                    <Label $gap={3}><Spark /><span>拉伸<Latin> 1</Latin></span></Label>
                  </Node>
                  <Node><Guide $indent={31} $last /><TreeSketch /><Label $gap={3}><Spark /><Latin>S2D0001</Latin></Label></Node>
                </ul>
              </TreeBox>
            </TreePane>
          </Navigator>

          <SashPair>
            <Sash $before={233} $after={68}>
              <SashButton aria-label="收起"><Chevron d="M4 1L1 4l3 3" w={5} h={8} /></SashButton>
            </Sash>
            <Sash $before={283} $after={18}>
              <SashButton aria-label="展开"><Chevron d="M1 1l3 3-3 3" w={5} h={8} /></SashButton>
            </Sash>
          </SashPair>

          <Viewport><Model /></Viewport>

          <SideTools>
            <Side items={sideOne} width={41} />
            <Side items={sideTwo} width={27} />
          </SideTools>
        </Workspace>
      </Window>

      <Footer>
        <Logo href="#"><strong>三维网</strong><span>3DPortal.cn</span></Logo>
      </Footer>
    </Page>
  );
}
